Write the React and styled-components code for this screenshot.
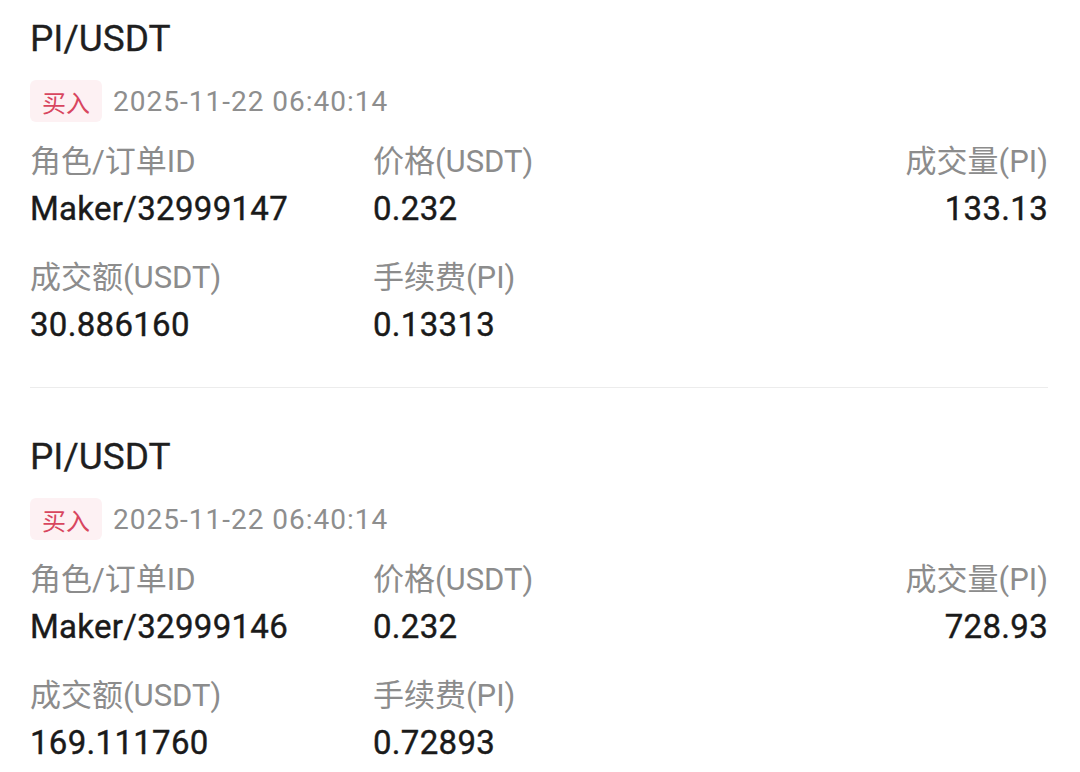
import React from "react";
import styled, { createGlobalStyle } from "styled-components";

const trades = [
  {
    pair: "PI/USDT",
    side: "买入",
    time: "2025-11-22 06:40:14",
    order: "Maker/32999147",
    price: "0.232",
    volume: "133.13",
    amount: "30.886160",
    fee: "0.13313",
  },
  {
    pair: "PI/USDT",
    side: "买入",
    time: "2025-11-22 06:40:14",
    order: "Maker/32999146",
    price: "0.232",
    volume: "728.93",
    amount: "169.111760",
    fee: "0.72893",
  },
];

export default function App() {
  return (
    <>
      <GlobalStyle />
      <Page>
        {trades.map((t, i) => (
          <Card key={i}>
            <Title>{t.pair}</Title>
            <Meta>
              <SideBadge>{t.side}</SideBadge>
              <Time>{t.time}</Time>
            </Meta>
            <Grid>
              <Field>
                <Label>角色/订单ID</Label>
                <Value>{t.order}</Value>
              </Field>
              <Field>
                <Label>价格(USDT)</Label>
                <Value>{t.price}</Value>
              </Field>
              <Field $right>
                <Label>成交量(PI)</Label>
                <Value>{t.volume}</Value>
              </Field>
              <Field>
                <Label>成交额(USDT)</Label>
                <Value>{t.amount}</Value>
              </Field>
              <Field>
                <Label>手续费(PI)</Label>
                <Value>{t.fee}</Value>
              </Field>
            </Grid>
          </Card>
        ))}
      </Page>
    </>
  );
}

const GlobalStyle = createGlobalStyle`
  body {
    margin: 0;
    background: #fff;
    font-family: "Roboto", "Noto Sans CJK SC", sans-serif;
  }
`;

const Page = styled.div`
  padding: 0 32px 0 30px;
  overflow: hidden;
  height: 772px;
  box-sizing: border-box;
`;

const Card = styled.div`
  padding: 45px 0 40px;
  border-bottom: 1px solid #ececec;
  &:first-child {
    padding-top: 15px;
  }
`;

const Title = styled.div`
  font-size: 37px;
  line-height: 48px;
  color: #1f1f1f;
  -webkit-text-stroke: 0.3px #1f1f1f;
`;

const Meta = styled.div`
  display: flex;
  align-items: center;
  gap: 11px;
  margin-top: 17px;
  height: 42px;
`;

const SideBadge = styled.span`
  display: flex;
  align-items: center;
  height: 42px;
  padding: 0 12px;
  border-radius: 6px;
  background: #fdf1f3;
  color: #d8465f;
  font-size: 24px;
  font-family: "Noto Sans CJK SC", sans-serif;
`;

const Time = styled.span`
  font-size: 28px;
  letter-spacing: 1px;
  color: #8e8e8e;
  padding-top: 1px;
`;

const Grid = styled.div`
  display: grid;
  grid-template-columns: 343px 1fr auto;
  row-gap: 27px;
  margin-top: 20px;
`;

const Field = styled.div`
  display: flex;
  flex-direction: column;
  gap: 5px;
  align-items: ${(p) => (p.$right ? "flex-end" : "flex-start")};
`;

const Label = styled.div`
  font-size: 31px;
  line-height: 40px;
  color: #8c8c8c;
`;

const Value = styled.div`
  font-size: 33px;
  line-height: 44px;
  letter-spacing: 0.3px;
  color: #1a1a1a;
  -webkit-text-stroke: 0.4px #1a1a1a;
`;
